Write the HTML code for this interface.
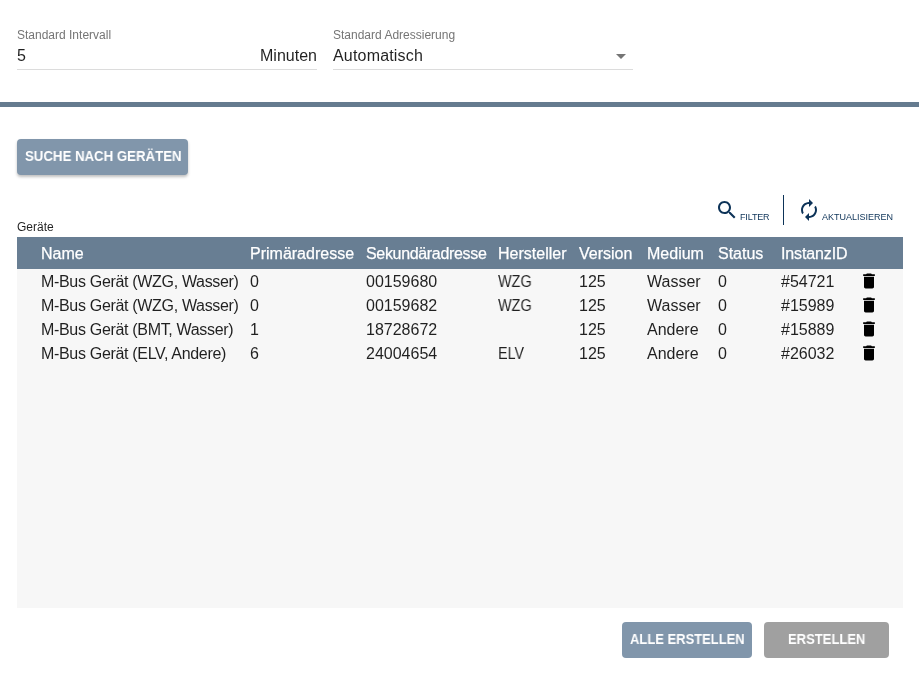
<!DOCTYPE html>
<html><head><meta charset="utf-8">
<style>
html,body{margin:0;padding:0;background:#fff;width:919px;height:692px;overflow:hidden;position:relative;font-family:"Liberation Sans",sans-serif;}
.a{position:absolute;white-space:nowrap;line-height:1;will-change:transform;}
.lbl{font-size:12px;color:#757575;}
.val{font-size:16px;color:rgba(0,0,0,0.87);}
.uline{position:absolute;height:1px;background:#dcdcdc;}
.bar{position:absolute;left:0;top:102px;width:919px;height:5px;background:#657b8f;}
.btn{position:absolute;border-radius:4px;color:#fff;font-weight:bold;font-size:14px;}
.btn span{position:absolute;white-space:nowrap;line-height:1;will-change:transform;}
.tool{font-size:9px;color:#0d3358;}
.thead{position:absolute;left:17px;top:237px;width:886px;height:32px;background:#687e93;}
.tbody{position:absolute;left:17px;top:269px;width:886px;height:339px;background:#f7f7f7;}
.th{font-size:16px;color:#fff;-webkit-text-stroke:0.25px #fff;}
.td{font-size:16px;color:rgba(0,0,0,0.87);}
</style></head><body>

<span class="a lbl" style="left:17px;top:29px">Standard Intervall</span>
<span class="a val" style="left:17px;top:48px">5</span>
<span class="a val" style="left:260px;top:48px">Minuten</span>
<div class="uline" style="left:17px;top:69px;width:300px"></div>

<span class="a lbl" style="left:333px;top:29px">Standard Adressierung</span>
<span class="a val" style="left:333px;top:48px;letter-spacing:0.18px">Automatisch</span>
<div class="uline" style="left:333px;top:69px;width:300px"></div>
<svg style="position:absolute;left:616px;top:54px" width="10" height="5" viewBox="0 0 10 5"><path d="M0 0L10 0L5 5Z" fill="#757575"/></svg>

<div class="bar"></div>

<div class="btn" style="left:17px;top:139px;width:171px;height:36px;background:#8196ab;box-shadow:0 2px 3px rgba(0,0,0,0.25)">
  <span style="left:8px;top:10px;transform:scaleX(0.945);transform-origin:0 0">SUCHE NACH GERÄTEN</span>
</div>

<svg style="position:absolute;left:715px;top:198px" width="24" height="24" viewBox="0 0 24 24"><path fill="#0d3358" d="M15.5 14h-.79l-.28-.27C15.41 12.59 16 11.11 16 9.5 16 5.91 13.09 3 9.5 3S3 5.91 3 9.5 5.91 16 9.5 16c1.61 0 3.09-.59 4.23-1.57l.27.28v.79l5 4.99L20.49 19l-4.99-5zm-6 0C7.01 14 5 11.99 5 9.5S7.01 5 9.5 5 14 7.01 14 9.5 11.99 14 9.5 14z"/></svg>
<span class="a tool" style="left:740px;top:213px;letter-spacing:-0.15px">FILTER</span>
<div style="position:absolute;left:783px;top:195px;width:1px;height:30px;background:#0d3358"></div>
<svg style="position:absolute;left:797px;top:198px" width="24" height="24" viewBox="0 0 24 24"><path fill="#0d3358" d="M12 6v3l4-4-4-4v3c-4.42 0-8 3.58-8 8 0 1.57.46 3.03 1.24 4.26L6.7 14.8c-.45-.83-.7-1.79-.7-2.8 0-3.31 2.69-6 6-6zm6.76 1.74L17.3 9.2c.44.84.7 1.79.7 2.8 0 3.31-2.69 6-6 6v-3l-4 4 4 4v-3c4.42 0 8-3.58 8-8 0-1.57-.46-3.03-1.24-4.26z"/></svg>
<span class="a tool" style="left:822px;top:213px">AKTUALISIEREN</span>

<span class="a lbl" style="left:17px;top:221px;color:rgba(0,0,0,0.87)">Geräte</span>

<div class="thead"></div>
<div class="tbody"></div>

<span class="a th" style="left:41px;top:246px">Name</span>
<span class="a th" style="left:250px;top:246px">Primäradresse</span>
<span class="a th" style="left:366px;top:246px;letter-spacing:-0.33px">Sekundäradresse</span>
<span class="a th" style="left:498px;top:246px">Hersteller</span>
<span class="a th" style="left:579px;top:246px">Version</span>
<span class="a th" style="left:647px;top:246px">Medium</span>
<span class="a th" style="left:718px;top:246px">Status</span>
<span class="a th" style="left:781px;top:246px;letter-spacing:-0.12px">InstanzID</span>

<span class="a td" style="letter-spacing:-0.32px;left:41px;top:274px">M-Bus Gerät (WZG, Wasser)</span>
<span class="a td" style="left:250px;top:274px">0</span>
<span class="a td" style="left:366px;top:274px">00159680</span>
<span class="a td" style="left:498px;top:274px;transform:scaleX(0.9);transform-origin:0 0">WZG</span>
<span class="a td" style="left:579px;top:274px">125</span>
<span class="a td" style="left:647px;top:274px">Wasser</span>
<span class="a td" style="left:718px;top:274px">0</span>
<span class="a td" style="left:781px;top:274px">#54721</span>
<svg style="position:absolute;left:859px;top:271px" width="20" height="20" viewBox="0 0 24 24"><path d="M6 19c0 1.1.9 2 2 2h8c1.1 0 2-.9 2-2V7H6v12zM19 4h-3.5l-1-1h-5l-1 1H5v2h14V4z"/></svg>
<span class="a td" style="letter-spacing:-0.32px;left:41px;top:298px">M-Bus Gerät (WZG, Wasser)</span>
<span class="a td" style="left:250px;top:298px">0</span>
<span class="a td" style="left:366px;top:298px">00159682</span>
<span class="a td" style="left:498px;top:298px;transform:scaleX(0.9);transform-origin:0 0">WZG</span>
<span class="a td" style="left:579px;top:298px">125</span>
<span class="a td" style="left:647px;top:298px">Wasser</span>
<span class="a td" style="left:718px;top:298px">0</span>
<span class="a td" style="left:781px;top:298px">#15989</span>
<svg style="position:absolute;left:859px;top:295px" width="20" height="20" viewBox="0 0 24 24"><path d="M6 19c0 1.1.9 2 2 2h8c1.1 0 2-.9 2-2V7H6v12zM19 4h-3.5l-1-1h-5l-1 1H5v2h14V4z"/></svg>
<span class="a td" style="letter-spacing:-0.32px;left:41px;top:322px">M-Bus Gerät (BMT, Wasser)</span>
<span class="a td" style="left:250px;top:322px">1</span>
<span class="a td" style="left:366px;top:322px">18728672</span>
<span class="a td" style="left:579px;top:322px">125</span>
<span class="a td" style="left:647px;top:322px">Andere</span>
<span class="a td" style="left:718px;top:322px">0</span>
<span class="a td" style="left:781px;top:322px">#15889</span>
<svg style="position:absolute;left:859px;top:319px" width="20" height="20" viewBox="0 0 24 24"><path d="M6 19c0 1.1.9 2 2 2h8c1.1 0 2-.9 2-2V7H6v12zM19 4h-3.5l-1-1h-5l-1 1H5v2h14V4z"/></svg>
<span class="a td" style="letter-spacing:-0.32px;left:41px;top:346px">M-Bus Gerät (ELV, Andere)</span>
<span class="a td" style="left:250px;top:346px">6</span>
<span class="a td" style="left:366px;top:346px">24004654</span>
<span class="a td" style="left:498px;top:346px;transform:scaleX(0.89);transform-origin:0 0">ELV</span>
<span class="a td" style="left:579px;top:346px">125</span>
<span class="a td" style="left:647px;top:346px">Andere</span>
<span class="a td" style="left:718px;top:346px">0</span>
<span class="a td" style="left:781px;top:346px">#26032</span>
<svg style="position:absolute;left:859px;top:343px" width="20" height="20" viewBox="0 0 24 24"><path d="M6 19c0 1.1.9 2 2 2h8c1.1 0 2-.9 2-2V7H6v12zM19 4h-3.5l-1-1h-5l-1 1H5v2h14V4z"/></svg>

<div class="btn" style="left:622px;top:622px;width:130px;height:36px;background:#8196ab">
  <span style="left:8px;top:10px;transform:scaleX(0.927);transform-origin:0 0">ALLE ERSTELLEN</span>
</div>
<div class="btn" style="left:764px;top:622px;width:125px;height:36px;background:#a0a0a0">
  <span style="left:24px;top:10px;transform:scaleX(0.93);transform-origin:0 0">ERSTELLEN</span>
</div>

</body></html>
